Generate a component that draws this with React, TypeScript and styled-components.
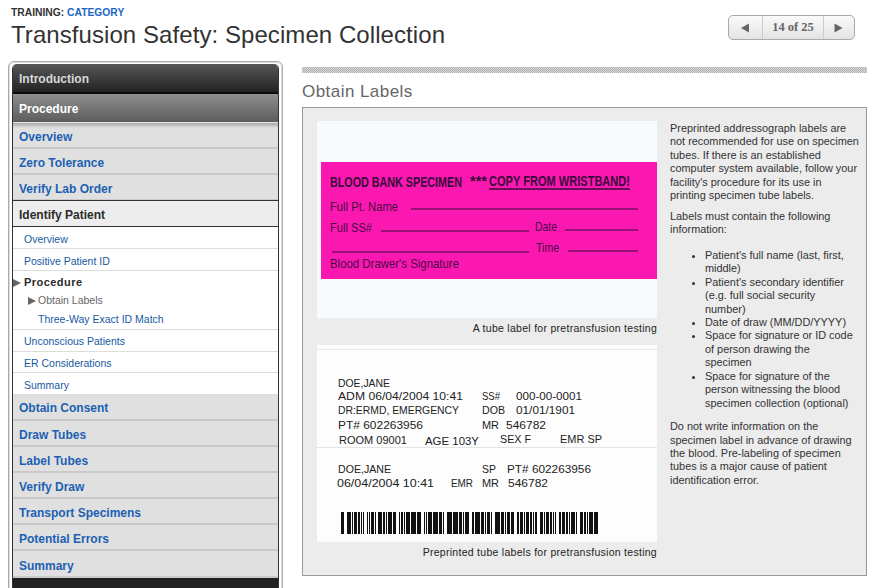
import { createGlobalStyle, styled } from "styled-components";

const GlobalStyle = createGlobalStyle`
  html, body {
    margin: 0;
    height: 100%;
    overflow: hidden;
    background: #fff;
    font-family: "Liberation Sans", Arial, sans-serif;
  }
`;

const Page = styled.div`
  width: 877px;
  height: 588px;
  overflow: hidden;
`;

const Header = styled.header`
  display: flex;
  justify-content: space-between;
  align-items: flex-start;
  height: 61px;
  padding: 0 22px 0 11px;
  box-sizing: border-box;
`;

const Crumb = styled.div`
  margin-top: 7px;
  font-size: 10.3px;
  line-height: 12px;
  font-weight: bold;
  color: #333;
  a {
    color: #1b66c4;
  }
`;

const Title = styled.h1`
  margin: 1px 0 0;
  font-size: 24px;
  line-height: 30px;
  font-weight: normal;
  color: #333;
  letter-spacing: 0.07px;
`;

const Pager = styled.div`
  display: flex;
  height: 25px;
  margin-top: 15px;
  border: 1px solid #aaa;
  border-radius: 5px;
  box-sizing: border-box;
  background: linear-gradient(#fafafa, #e4e4e4);
`;

const PagerArrow = styled.div<{ $w: number }>`
  width: ${(p) => p.$w}px;
  display: flex;
  align-items: center;
  justify-content: center;
`;

const PagerCount = styled.div`
  width: 62px;
  box-sizing: border-box;
  text-align: center;
  border-left: 1px solid #ccc;
  border-right: 1px solid #ccc;
  font: bold 12.5px/23px "Liberation Serif", serif;
  color: #666;
`;

const Body = styled.div`
  display: flex;
  align-items: flex-start;
  padding: 0 10px 0 8px;
  gap: 19px;
`;

const Sidebar = styled.nav`
  width: 275px;
  flex: none;
  box-sizing: border-box;
  padding: 2px 3px;
  border: 1px solid #aaa;
  border-radius: 6px;
  box-shadow: inset 0 0 0 1px #ddd;
  background: #fff;
`;

const SideInner = styled.div`
  border-left: 1px solid #333;
  border-right: 1px solid #333;
  border-radius: 5px 5px 0 0;
  overflow: hidden;
`;

const SectionHead = styled.div<{ $open?: boolean }>`
  height: ${(p) => (p.$open ? 29 : 30)}px;
  box-sizing: border-box;
  padding-left: 6px;
  font-size: 12px;
  font-weight: bold;
  line-height: 30px;
  color: ${(p) => (p.$open ? "#fff" : "#d8d8d8")};
  background: ${(p) =>
    p.$open
      ? "linear-gradient(#8e8e8e, #5c5c5c)"
      : "linear-gradient(#565656, #232323)"};
  border-bottom: ${(p) => (p.$open ? "1px solid #e6e6e6" : "2px solid #0c0c0c")};
`;

const TopicRow = styled.div<{ $shadow?: boolean; $h?: number; $lh?: number }>`
  height: ${(p) => p.$h ?? 26}px;
  box-sizing: border-box;
  padding-left: 6px;
  font-size: 12px;
  font-weight: bold;
  line-height: ${(p) => p.$lh ?? 28}px;
  color: #1c60b3;
  background: ${(p) =>
    p.$shadow ? "linear-gradient(#a8a8a8, #e0e0e0 5px)" : "#e0e0e0"};
  border-bottom: 2px solid #c9c9c9;
`;

const ActiveTopic = styled.div`
  height: 27px;
  box-sizing: border-box;
  margin-top: -1px;
  padding-left: 6px;
  font-size: 12px;
  font-weight: bold;
  line-height: 29px;
  color: #2c2c2c;
  background: #ededed;
  border-top: 1px solid #333;
  border-bottom: 1px solid #333;
`;

const SubRow = styled.div<{ $h?: number; $lh?: number }>`
  height: ${(p) => p.$h ?? 22}px;
  box-sizing: border-box;
  padding-left: 11px;
  font-size: 10.5px;
  line-height: ${(p) => p.$lh ?? 24}px;
  color: #17599f;
  background: #fff;
  border-bottom: 1px solid #ddd;
`;

const SubGroup = styled.div`
  height: 59px;
  box-sizing: border-box;
  padding: 5px 0 0 11px;
  background: #fff;
  border-bottom: 1px solid #ddd;
`;

const Marker = styled.span`
  position: absolute;
  top: 50%;
  margin-top: -4px;
  border-left: 8px solid #666;
  border-top: 4px solid transparent;
  border-bottom: 4px solid transparent;
`;

const SubCurrent = styled.div`
  position: relative;
  font-size: 11px;
  font-weight: bold;
  line-height: 13px;
  letter-spacing: 0.45px;
  color: #2a2a2a;
  ${Marker} {
    left: -11px;
  }
`;

const SubSub = styled.div<{ $current?: boolean }>`
  position: relative;
  margin: ${(p) => (p.$current ? "5px" : "6px")} 0 0 14px;
  font-size: 10.5px;
  line-height: 13px;
  color: ${(p) => (p.$current ? "#666" : "#17599f")};
  ${Marker} {
    left: -10px;
  }
`;

const SideFoot = styled.div`
  height: 40px;
  background: #222;
`;

const Main = styled.main`
  width: 565px;
  flex: none;
  padding-top: 6px;
`;

const Stripe = styled.div`
  height: 6px;
  background: repeating-conic-gradient(#acacac 0 25%, #dedede 0 50%) 0 0 / 2px 2px;
`;

const SectionTitle = styled.h2`
  margin: 8px 0 0;
  font-size: 17px;
  line-height: 21px;
  font-weight: normal;
  color: #666;
  letter-spacing: 0.45px;
`;

const Panel = styled.section`
  display: flex;
  gap: 13px;
  height: 469px;
  margin-top: 5px;
  box-sizing: border-box;
  padding: 13px 0 0 14px;
  background: #ececec;
  border: 1px solid #999;
`;

const Figures = styled.div`
  width: 340px;
  flex: none;
`;

const Figure = styled.figure`
  margin: 0 0 10px;
  svg {
    display: block;
  }
`;

const Caption = styled.figcaption`
  margin-top: 4px;
  font-size: 10.5px;
  line-height: 13px;
  text-align: right;
  color: #222;
  letter-spacing: 0.28px;
`;

const Notes = styled.div`
  width: 189.5px;
  padding-top: 1px;
  font-size: 10.9px;
  line-height: 13.4px;
  color: #333;
`;

const Para = styled.p`
  margin: 0 0 7.6px;
`;

const List = styled.ul`
  margin: 12.2px 0 10.2px;
  padding: 0 5px 0 35px;
`;

const LabelHead = styled.text`
  font: bold 14.5px "Liberation Sans", sans-serif;
  fill: #3a0a3c;
`;

const LabelField = styled.text`
  font: 13.5px "Liberation Sans", sans-serif;
  fill: #4a0a48;
`;

const LabelPrint = styled.text`
  font: 11px "Liberation Sans", sans-serif;
  fill: #222;
`;

type T = [string, number, number, number];

const pinkHeads: T[] = [
  ["BLOOD BANK SPECIMEN", 330, 187, 132],
  ["***", 470, 186, 17],
  ["COPY FROM WRISTBAND!", 489, 186, 141],
];

const pinkFields: T[] = [
  ["Full Pt. Name", 330, 211, 68],
  ["Full SS#", 330, 232, 42],
  ["Date", 535, 231, 22],
  ["Time", 536, 252, 23],
  ["Blood Drawer's Signature", 330, 268, 129],
];

const pinkLines: [number, number, number, number][] = [
  [489, 630, 189, 1.6],
  [411, 638, 209, 1.2],
  [381, 529, 231, 1.2],
  [565, 638, 230, 1.2],
  [332, 529, 252, 1.2],
  [568, 638, 251, 1.2],
];

const printText: T[] = [
  ["DOE,JANE", 338, 387, 52],
  ["ADM 06/04/2004  10:41", 338, 400, 125],
  ["SS#", 482, 400, 18],
  ["000-00-0001", 516, 400, 66],
  ["DR:ERMD, EMERGENCY", 338, 414, 121],
  ["DOB", 482, 414, 23],
  ["01/01/1901", 516, 414, 59],
  ["PT# 602263956", 338, 429, 85],
  ["MR", 482, 429, 17],
  ["546782", 506, 429, 40],
  ["ROOM 09001", 339, 444, 68],
  ["AGE  103Y", 425, 445, 54],
  ["SEX F", 500, 443, 31],
  ["EMR  SP", 560, 443, 42],
  ["DOE,JANE", 338, 473, 53],
  ["SP", 482, 473, 14],
  ["PT# 602263956", 507, 473, 84],
  ["06/04/2004  10:41", 337, 487, 97],
  ["EMR", 451, 487, 22],
  ["MR", 482, 487, 17],
  ["546782", 508, 487, 40],
];

// barcode blocks as they sit on the label, filled from a repeating bar pattern
const barGroups = [
  [341, 343], [347, 363], [367, 375], [378, 395], [399, 420], [424, 443],
  [447, 468], [472, 491], [495, 513], [517, 536], [540, 555], [559, 576], [580, 597],
];
const barPattern = "###.###.#.###.##.#.####.##";

const bars = barGroups.flatMap(([from, to], g) => {
  const xs: number[] = [];
  for (let x = from; x <= to; x++) {
    const on = barPattern[(x - from + g * 3) % barPattern.length] === "#";
    if (on || x === from || x === to) xs.push(x);
  }
  return xs;
});

// label print is condensed, squeeze horizontally so the glyphs stay tall
const HEAD_SQUEEZE = 0.74;

const PinkLabel = () => (
  <svg width={340} height={197} viewBox="317 121 340 197">
    <rect x={317} y={121} width={340} height={197} fill="#f8fbfd" />
    <rect x={321} y={162} width={336} height={117} fill="#fb18b0" />
    {pinkHeads.map(([t, x, y, w]) => (
      <LabelHead
        key={t}
        transform={`translate(${x} ${y}) scale(${HEAD_SQUEEZE} 1)`}
        textLength={w / HEAD_SQUEEZE}
        lengthAdjust="spacingAndGlyphs"
      >
        {t}
      </LabelHead>
    ))}
    {pinkFields.map(([t, x, y, w]) => (
      <LabelField key={t} x={x} y={y} textLength={w} lengthAdjust="spacingAndGlyphs">
        {t}
      </LabelField>
    ))}
    {pinkLines.map(([a, b, y, sw]) => (
      <line key={`${a}-${y}`} x1={a} x2={b} y1={y} y2={y} stroke="#3a0a3c" strokeWidth={sw} />
    ))}
  </svg>
);

const TubeLabels = () => (
  <svg width={340} height={197} viewBox="317 345 340 197">
    <rect x={317} y={345} width={340} height={197} fill="#fdfdfd" />
    <line x1={317} x2={657} y1={349.5} y2={349.5} stroke="#e8e8e8" />
    <line x1={317} x2={657} y1={447.5} y2={447.5} stroke="#e4e4e4" />
    {printText.map(([t, x, y, w]) => (
      <LabelPrint key={`${t}-${y}-${x}`} x={x} y={y} textLength={w} lengthAdjust="spacingAndGlyphs">
        {t}
      </LabelPrint>
    ))}
    {bars.map((x) => (
      <rect key={x} x={x} y={512} width={1} height={22} fill="#111" />
    ))}
  </svg>
);

const Arrow = ({ left }: { left?: boolean }) => (
  <svg width="11" height="10" viewBox="0 0 11 10">
    <path d={left ? "M1 5 9 0.5V9.5Z" : "M8.5 5 0.5 0.5V9.5Z"} fill="#666" />
  </svg>
);

const topicsBefore = ["Overview", "Zero Tolerance", "Verify Lab Order"];
const topicsAfter = ["Draw Tubes", "Label Tubes", "Verify Draw", "Transport Specimens", "Potential Errors"];

export default function App() {
  return (
    <Page>
      <GlobalStyle />
      <Header>
        <div>
          <Crumb>
            TRAINING: <a>CATEGORY</a>
          </Crumb>
          <Title>Transfusion Safety: Specimen Collection</Title>
        </div>
        <Pager>
          <PagerArrow $w={33}>
            <Arrow left />
          </PagerArrow>
          <PagerCount>14 of 25</PagerCount>
          <PagerArrow $w={30}>
            <Arrow />
          </PagerArrow>
        </Pager>
      </Header>
      <Body>
        <Sidebar>
          <SideInner>
            <SectionHead>Introduction</SectionHead>
            <SectionHead $open>Procedure</SectionHead>
            {topicsBefore.map((t, i) => (
              <TopicRow key={t} $shadow={i === 0}>
                {t}
              </TopicRow>
            ))}
            <ActiveTopic>Identify Patient</ActiveTopic>
            <SubRow>Overview</SubRow>
            <SubRow>Positive Patient ID</SubRow>
            <SubGroup>
              <SubCurrent>
                <Marker />
                Procedure
              </SubCurrent>
              <SubSub $current>
                <Marker />
                Obtain Labels
              </SubSub>
              <SubSub>Three-Way Exact ID Match</SubSub>
            </SubGroup>
            <SubRow $lh={22}>Unconscious Patients</SubRow>
            <SubRow $h={21} $lh={22}>
              ER Considerations
            </SubRow>
            <SubRow>Summary</SubRow>
            <TopicRow $lh={26}>Obtain Consent</TopicRow>
            {topicsAfter.map((t) => (
              <TopicRow key={t}>{t}</TopicRow>
            ))}
            <TopicRow $h={27} $lh={30}>
              Summary
            </TopicRow>
            <SideFoot />
          </SideInner>
        </Sidebar>
        <Main>
          <Stripe />
          <SectionTitle>Obtain Labels</SectionTitle>
          <Panel>
            <Figures>
              <Figure>
                <PinkLabel />
                <Caption>A tube label for pretransfusion testing</Caption>
              </Figure>
              <Figure>
                <TubeLabels />
                <Caption>Preprinted tube labels for pretransfusion testing</Caption>
              </Figure>
            </Figures>
            <Notes>
              <Para>
                Preprinted addressograph labels are not recommended for use on specimen tubes. If
                there is an established computer system available, follow your facility's procedure
                for its use in printing specimen tube labels.
              </Para>
              <Para>Labels must contain the following information:</Para>
              <List>
                <li>Patient's full name (last, first, middle)</li>
                <li>Patient's secondary identifier (e.g. full social security number)</li>
                <li>Date of draw (MM/DD/YYYY)</li>
                <li>Space for signature or ID code of person drawing the specimen</li>
                <li>Space for signature of the person witnessing the blood specimen collection (optional)</li>
              </List>
              <Para>
                Do not write information on the specimen label in advance of drawing the blood.
                Pre-labeling of specimen tubes is a major cause of patient identification error.
              </Para>
            </Notes>
          </Panel>
        </Main>
      </Body>
    </Page>
  );
}
